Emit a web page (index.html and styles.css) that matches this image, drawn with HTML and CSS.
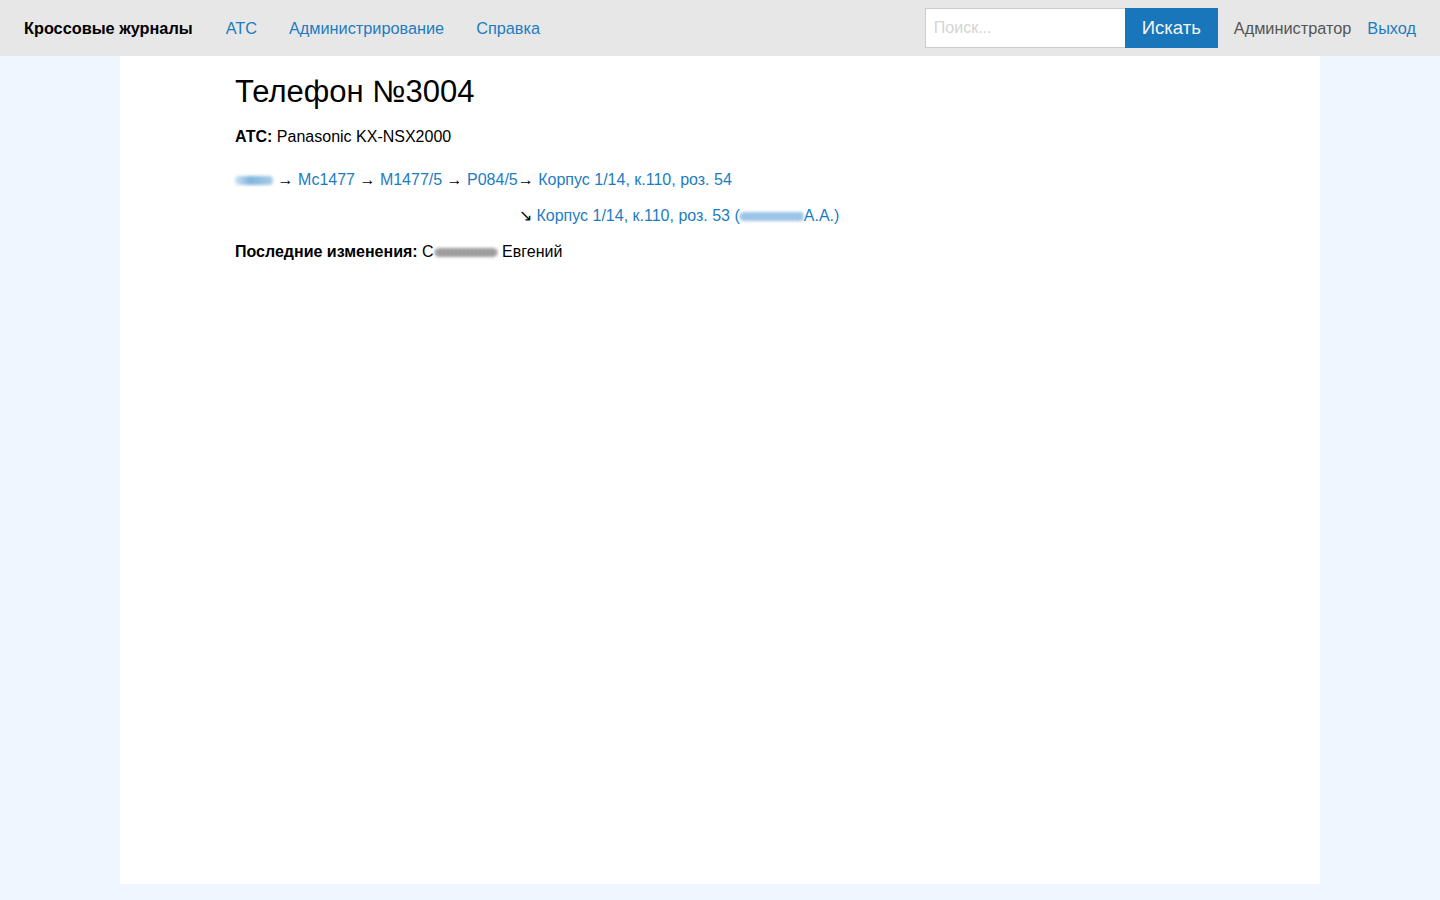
FILE: index.html
```html
<!DOCTYPE html>
<html lang="ru">
<head>
<meta charset="utf-8">
<title>Телефон №3004</title>
<link rel="stylesheet" href="styles.css">
</head>
<body>
<nav class="navbar">
  <div class="nav-left">
    <a class="brand" href="#">Кроссовые журналы</a>
    <a class="nav-link" href="#">АТС</a>
    <a class="nav-link" href="#">Администрирование</a>
    <a class="nav-link" href="#">Справка</a>
  </div>
  <div class="nav-right">
    <form class="search">
      <input class="search-input" type="text" placeholder="Поиск...">
      <button class="search-btn" type="button">Искать</button>
    </form>
    <span class="user">Администратор</span>
    <a class="nav-link logout" href="#">Выход</a>
  </div>
</nav>
<main class="page">
  <div class="content">
    <h1 class="title">Телефон №3004</h1>
    <p class="line"><b>АТС:</b> Panasonic KX-NSX2000</p>
    <p class="line chain"><a href="#"><span class="redact redact-short"></span></a> → <a href="#">Мс1477</a> → <a href="#">М1477/5</a> → <a href="#">Р084/5</a>→ <a href="#">Корпус 1/14, к.110, роз. 54</a></p>
    <p class="line chain branch">↘ <a href="#">Корпус 1/14, к.110, роз. 53 (<span class="redact redact-long"></span>А.А.)</a></p>
    <p class="line"><b>Последние изменения:</b> С<span class="redact redact-grey"></span> Евгений</p>
  </div>
</main>
</body>
</html>
```
FILE: styles.css
```css
* { box-sizing: border-box; }
html, body { margin: 0; padding: 0; }
body {
  background: #eef6ff;
  font-family: "Liberation Sans", Arial, sans-serif;
  font-size: 16px;
  color: #000;
}
a { color: #1c7cc2; text-decoration: none; }
.navbar {
  height: 56px;
  background: #e7e7e7;
  display: flex;
  align-items: center;
  justify-content: space-between;
  padding: 0 24px;
  font-size: 16.3px;
}
.nav-left, .nav-right { display: flex; align-items: center; }
.brand {
  color: #000;
  font-weight: bold;
  margin-right: 17px;
}
.nav-left .nav-link { margin: 0 16px; }
.search { display: flex; margin: 0 16px 0 0; }
.search-input {
  width: 200px;
  height: 40px;
  border: 1px solid #cccccc;
  border-right: none;
  background: #fff;
  padding: 0 8px;
  font-family: inherit;
  font-size: 16px;
  outline: none;
}
.search-input::placeholder { color: #d4d4d4; }
.search-btn {
  width: 93px;
  height: 40px;
  border: none;
  background: #1a76bb;
  color: #f4f4f4;
  font-family: inherit;
  font-size: 18.5px;
  padding: 0;
}
.user { color: #555; margin-right: 16px; }
.page {
  width: 1200px;
  margin: 0 auto;
  background: #fff;
  min-height: 828px;
}
.content { padding: 14px 115px 20px; }
.title {
  font-size: 31px;
  font-weight: normal;
  margin: 0 0 14px;
  line-height: 44px;
}
.line { margin: 0 0 18px; line-height: 18px; }
.chain { margin-top: 25px; }
.branch { margin-left: 284px; margin-top: 0; }
.redact {
  display: inline-block;
  vertical-align: middle;
  height: 9px;
  border-radius: 4px;
  filter: blur(1.5px);
}
.redact-short { width: 38px; background: linear-gradient(90deg, #cfe3f4, #7fb4dd 40%, #a9cde9); }
.redact-long { width: 64px; background: repeating-linear-gradient(90deg, #7eb2dc 0 2px, #b9d7ef 2px 4px); }
.redact-grey { width: 62px; background: repeating-linear-gradient(90deg, #777 0 2px, #c4c4c4 2px 4px); margin-left: 1px; margin-right: 1px; }
```
